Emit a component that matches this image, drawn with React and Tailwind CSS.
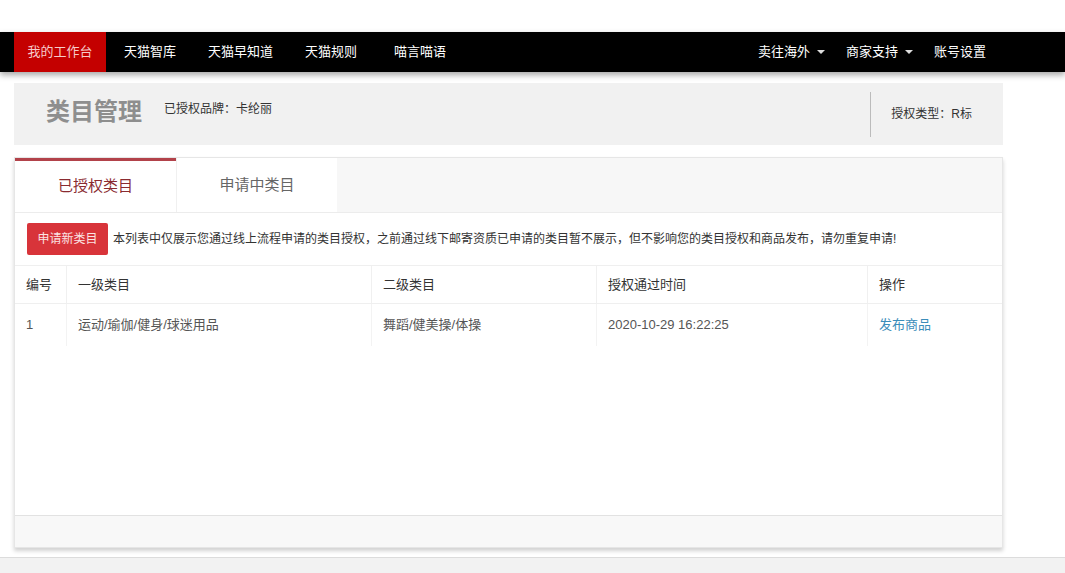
const NAV_LEFT = [
  { label: '天猫智库', ml: 'ml-[18px]' },
  { label: '天猫早知道', ml: 'ml-[32px]' },
  { label: '天猫规则', ml: 'ml-[32px]' },
  { label: '喵言喵语', ml: 'ml-[37px]' },
]

const COLS = [
  { key: 'id', label: '编号', w: 'w-[51px]' },
  { key: 'c1', label: '一级类目', w: 'w-[305px]' },
  { key: 'c2', label: '二级类目', w: 'w-[225px]' },
  { key: 'time', label: '授权通过时间', w: 'w-[271px]' },
  { key: 'op', label: '操作', w: 'flex-1' },
]

const ROWS = [
  { id: '1', c1: '运动/瑜伽/健身/球迷用品', c2: '舞蹈/健美操/体操', time: '2020-10-29 16:22:25' },
]

function Caret() {
  return <span className="ml-[7px] inline-block w-0 h-0 border-x-[4px] border-x-transparent border-t-[4px] border-t-[#ddd]" />
}

export default function App() {
  return (
    <div
      className="w-[1065px] h-[573px] overflow-hidden bg-white flex flex-col"
      style={{ fontFamily: '"Liberation Sans", "Noto Sans CJK SC", sans-serif' }}
    >
      <div className="h-[32px] shrink-0" />

      {/* top nav */}
      <div className="h-[40px] shrink-0 bg-black flex items-stretch pl-[14px] pr-[79px] text-[13px] text-white shadow-[0_3px_6px_rgba(0,0,0,0.35)] relative z-10">
        <div className="w-[92px] bg-[#c40000] text-[#f6caca] flex items-center justify-center">我的工作台</div>
        {NAV_LEFT.map(n => (
          <div key={n.label} className={`${n.ml} flex items-center`}>{n.label}</div>
        ))}
        <div className="flex-1" />
        <div className="flex items-center">卖往海外<Caret /></div>
        <div className="ml-[21px] flex items-center">商家支持<Caret /></div>
        <div className="ml-[21px] flex items-center">账号设置</div>
      </div>

      <div className="flex-1 flex flex-col pl-[14px] pr-[62px] pt-[11px]">
        {/* title bar */}
        <div className="h-[62px] shrink-0 bg-[#f1f1f1] flex items-center pl-[32px]">
          <div className="text-[24px] font-bold text-[#8e8e8e] leading-none mb-[4px]">类目管理</div>
          <div className="ml-[22px] text-[12px] text-[#333] self-start mt-[17px]">已授权品牌：卡纶丽</div>
          <div className="flex-1" />
          <div className="h-[45px] border-l border-[#bbb] pl-[20px] pr-[31px] flex items-center text-[12px] text-[#333]">授权类型：R标</div>
        </div>

        {/* tab panel */}
        <div className="mt-[12px] h-[391px] shrink-0 flex flex-col border border-[#e6e6e6] shadow-[0_3px_4px_rgba(0,0,0,0.18)]">
          <div className="h-[55px] shrink-0 flex bg-[#f7f7f7] border-b border-[#ececec]">
            <div className="w-[161px] bg-white border-t-[3px] border-[#b2424a] flex items-center justify-center text-[15px] text-[#8a2b31]">已授权类目</div>
            <div className="w-[161px] bg-white border-l border-[#f0f0f0] flex items-center justify-center text-[15px] text-[#666]">申请中类目</div>
          </div>

          <div className="flex-1 bg-white flex flex-col">
            <div className="h-[53px] flex items-center pl-[12px] border-b border-[#efefef]">
              <button type="button" className="h-[32px] w-[81px] rounded-[2px] bg-[#d8343a] text-[12px] text-[#fbe3e3]">申请新类目</button>
              <span className="ml-[5px] text-[12px] text-[#333]">本列表中仅展示您通过线上流程申请的类目授权，之前通过线下邮寄资质已申请的类目暂不展示，但不影响您的类目授权和商品发布，请勿重复申请!</span>
            </div>

            <div className="flex h-[38px] border-b border-[#efefef] text-[13px] text-[#333]">
              {COLS.map((c, i) => (
                <div key={c.key} className={`${c.w} pl-[11px] flex items-center ${i > 0 ? 'border-l border-[#f0f0f0]' : ''}`}>{c.label}</div>
              ))}
            </div>
            {ROWS.map(r => (
              <div key={r.id} className="flex h-[42px] text-[13px] text-[#555]">
                {COLS.map((c, i) => (
                  <div key={c.key} className={`${c.w} pl-[11px] flex items-center ${i > 0 ? 'border-l border-[#f3f3f3]' : ''}`}>
                    {c.key === 'op' ? <span className="text-[#3b8dba]">发布商品</span> : r[c.key]}
                  </div>
                ))}
              </div>
            ))}
            <div className="flex-1" />
            <div className="h-[32px] bg-[#f8f8f8] border-t border-[#e2e2e2]" />
          </div>
        </div>
      </div>

      <div className="h-[16px] shrink-0 bg-[#f2f2f2] border-t border-[#dcdcdc]" />
    </div>
  )
}
